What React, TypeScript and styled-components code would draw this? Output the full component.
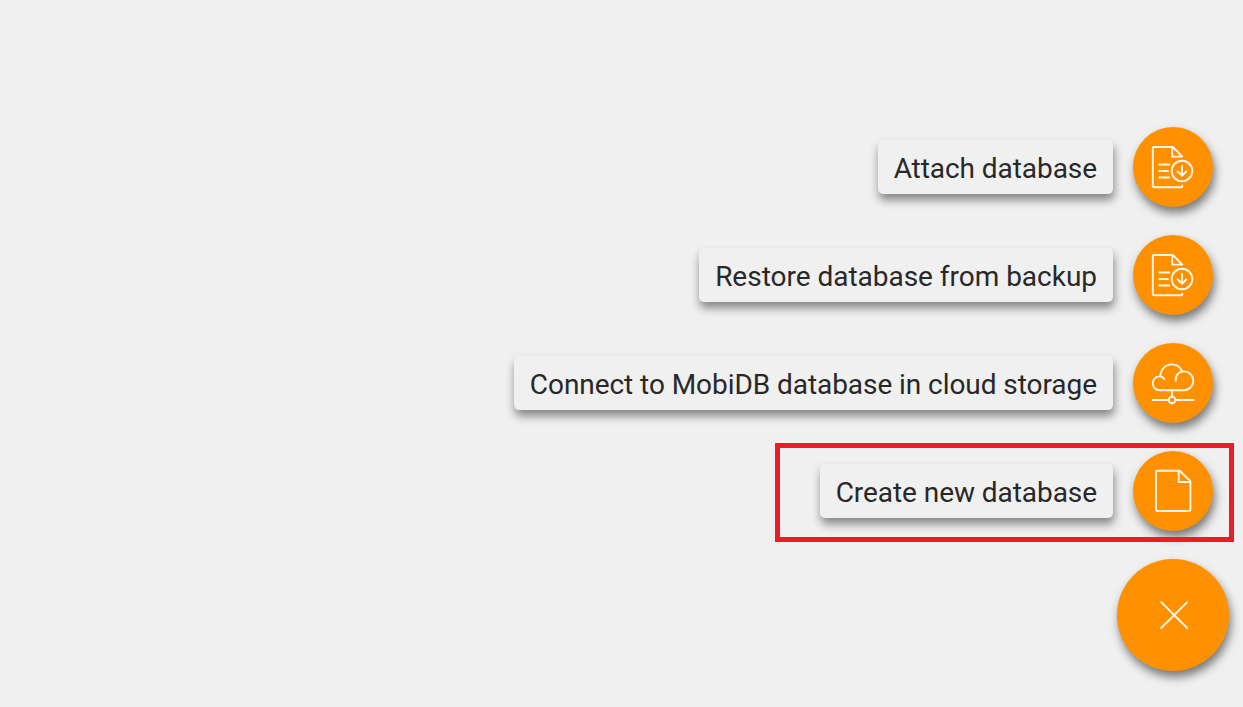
import React from "react";
import styled, { createGlobalStyle } from "styled-components";

const GlobalStyle = createGlobalStyle`
  html, body, #root { height: 100%; }
  body { margin: 0; background: #f0f0f0; overflow: hidden; }
  * { box-sizing: border-box; }
`;

const Screen = styled.main`
  width: 100%;
  height: 100%;
  min-height: 707px;
  padding: 127px 14px 0 0;
  display: flex;
  flex-direction: column;
  align-items: flex-end;
  gap: 28px;
  font-family: Roboto, "Liberation Sans", sans-serif;
`;

const ActionRow = styled.div`
  position: relative;
  display: flex;
  align-items: center;
  gap: 20px;
  height: 80px;
  padding-right: 16px;
`;

const Label = styled.span<{ $spacing: number }>`
  height: 54px;
  padding: 0 16px;
  border-radius: 5px;
  background: #f0f0f0;
  color: #282828;
  font-size: 28px;
  line-height: 57px;
  letter-spacing: ${(p) => p.$spacing}px;
  white-space: nowrap;
  box-shadow: 1px 6px 10px rgba(0, 0, 0, 0.45);
`;

const RoundButton = styled.button<{ $size: number }>`
  flex: none;
  width: ${(p) => p.$size}px;
  height: ${(p) => p.$size}px;
  padding: 0;
  border: 0;
  border-radius: 50%;
  background: #ff9100;
  box-shadow: 2px 6px 10px rgba(0, 0, 0, 0.5);

  svg {
    display: block;
    width: 100%;
    height: 100%;
    fill: none;
    stroke: #fff6e8;
    stroke-width: 1.9;
    stroke-linecap: round;
    stroke-linejoin: round;
  }
`;

const Highlight = styled.div`
  position: absolute;
  top: -8px;
  right: -5px;
  width: 459px;
  height: 99px;
  border: 5px solid #ed1c24;
  pointer-events: none;
`;

const ImportIcon = () => (
  <svg viewBox="0 0 80 80">
    <path d="M49.3 58.6v.6q0 1-1 1H21q-1.2 0-1.2-1.2V21.2Q19.8 20 21 20h18.8l9.5 9.6H39.2V20.3" />
    <path d="M26.3 37.5h10M26.3 44h8.7M26.3 50.5h10" />
    <circle cx="49" cy="44" r="10.3" />
    <path d="M49 39v9.6M44.6 44.4l4.4 4.3 4.4-4.3" />
  </svg>
);

const CloudIcon = () => (
  <svg viewBox="0 0 80 80">
    <path d="M31.2 36c-1-1.7-2.8-2.6-4.8-2.6-3.9 0-6.7 3.1-6.7 6.9 0 3.9 3.1 7 7 7h24.2c5.2 0 9.4-4.2 9.4-9.5s-4.1-9.4-9.3-9.4-8.9 4.2-8.3 9.4" />
    <path d="M27.3 33.3c.1-6.7 5.1-11.9 11.6-11.9 4.4 0 8.2 2.4 10 6.7" />
    <path d="M39 47.5v6.2M19.8 57h15.7M42.5 57h18" />
    <circle cx="39" cy="57" r="3.3" />
  </svg>
);

const FileIcon = () => (
  <svg viewBox="0 0 80 80">
    <path d="M46.7 19.7H24.2q-1.2 0-1.2 1.2v37.9q0 1.2 1.2 1.2h32q1.2 0 1.2-1.2V30.2L46.7 19.7h-1V31h11.5" />
  </svg>
);

const CloseIcon = () => (
  <svg viewBox="0 0 112 112">
    <path d="M44.2 43.2l26 25.8M70.2 43.2l-26 25.8" />
  </svg>
);

const actions = [
  { text: "Attach database", Icon: ImportIcon, spacing: -0.06 },
  { text: "Restore database from backup", Icon: ImportIcon, spacing: -0.02 },
  { text: "Connect to MobiDB database in cloud storage", Icon: CloudIcon, spacing: -0.06 },
  { text: "Create new database", Icon: FileIcon, spacing: -0.06, highlighted: true },
];

export default function App() {
  return (
    <>
      <GlobalStyle />
      <Screen>
        {actions.map(({ text, Icon, spacing, highlighted }) => (
          <ActionRow key={text}>
            <Label $spacing={spacing}>{text}</Label>
            <RoundButton $size={80} aria-label={text}>
              <Icon />
            </RoundButton>
            {highlighted && <Highlight />}
          </ActionRow>
        ))}
        <RoundButton $size={112} aria-label="Close">
          <CloseIcon />
        </RoundButton>
      </Screen>
    </>
  );
}
